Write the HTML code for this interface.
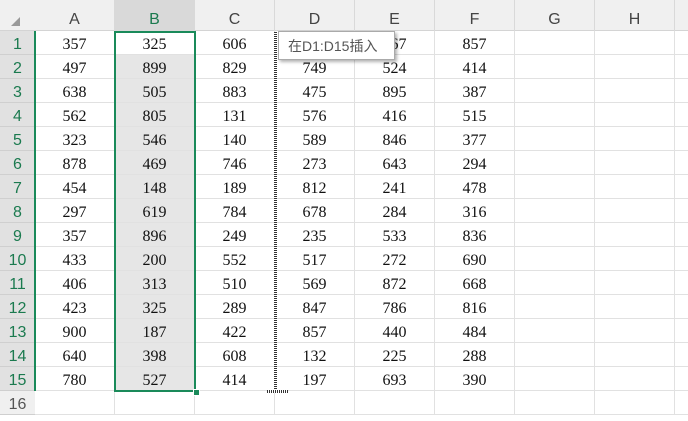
<!DOCTYPE html><html><head><style>
body{margin:0;width:688px;height:421px;overflow:hidden;background:#fff;position:relative;font-family:"Liberation Serif",serif}
.h{position:absolute;top:0;height:31px;background:#f0f0f0;border-bottom:1px solid #d4d4d4;box-sizing:border-box}
.ch{position:absolute;top:0;height:31px;font:16px "Liberation Sans",sans-serif;line-height:39px;text-align:center;color:#444;border-right:1px solid #d9d9d9;box-sizing:border-box}
.rh{position:absolute;left:0;width:35px;height:24px;font:16px "Liberation Sans",sans-serif;line-height:27px;text-align:center;color:#1b7a4f;background:#e1e1e1;border-bottom:1px solid #cfcfcf;box-sizing:border-box}
.c{position:absolute;height:24px;line-height:28px;text-align:center;font-size:16px;color:#111;border-right:1px solid #e1e1e1;border-bottom:1px solid #e1e1e1;box-sizing:border-box;width:80px}
</style></head><body>
<div class="h" style="left:0;width:688px"></div>
<div style="position:absolute;left:11px;top:17px;width:0;height:0;border-left:9px solid transparent;border-bottom:9px solid #999"></div>
<div id="g"></div>
<script>
var d=[[357,325,606,'',567,857],[497,899,829,749,524,414],[638,505,883,475,895,387],[562,805,131,576,416,515],[323,546,140,589,846,377],[878,469,746,273,643,294],[454,148,189,812,241,478],[297,619,784,678,284,316],[357,896,249,235,533,836],[433,200,552,517,272,690],[406,313,510,569,872,668],[423,325,289,847,786,816],[900,187,422,857,440,484],[640,398,608,132,225,288],[780,527,414,197,693,390]];
var L="ABCDEFGH",h='';
for(var i=0;i<8;i++){var x=35+i*80;h+='<div class="ch" style="left:'+x+'px;width:80px;'+(i==1?'background:#d9d9d9;color:#1b7a4f;':'')+'">'+L[i]+'</div>';}
h+='<div class="ch" style="left:675px;width:20px"></div>';
for(var r=0;r<16;r++){var y=31+r*24;
h+='<div class="rh" style="top:'+y+'px;'+(r==15?'background:#f0f0f0;color:#555;':'')+'">'+(r+1)+'</div>';
for(var c=0;c<9;c++){var v=(r<15&&c<6)?d[r][c]:'';var bg=(c==1&&r>0&&r<15)?'background:#e6e6e6;':'';
h+='<div class="c" style="left:'+(35+c*80)+'px;top:'+y+'px;'+bg+'">'+v+'</div>';}}
document.getElementById('g').innerHTML=h;
</script>
<div style="position:absolute;left:34px;top:31px;width:2px;height:360px;background:#1a8a5a"></div>
<div style="position:absolute;left:114px;top:31px;width:82px;height:361px;border:2px solid #1a8a5a;box-sizing:border-box"></div>
<div style="position:absolute;left:193px;top:389px;width:5px;height:5px;background:#1a8a5a;border:1px solid #fff"></div>
<div style="position:absolute;left:274px;top:32px;width:3px;height:360px;background:repeating-linear-gradient(#333 0 1px,#fff 1px 2px)"></div>
<div style="position:absolute;left:267px;top:390px;width:21px;height:3px;background:repeating-linear-gradient(90deg,#333 0 1px,#fff 1px 2px)"></div>
<div style="position:absolute;left:278px;top:31px;width:117px;height:29px;background:#fff;border:1px solid #aaa;box-shadow:2px 2px 3px rgba(0,0,0,.3);font:14px 'Liberation Sans','Noto Sans CJK SC',sans-serif;line-height:29px;color:#555;padding-left:9px;box-sizing:border-box">在D1:D15插入</div>
</body></html>
